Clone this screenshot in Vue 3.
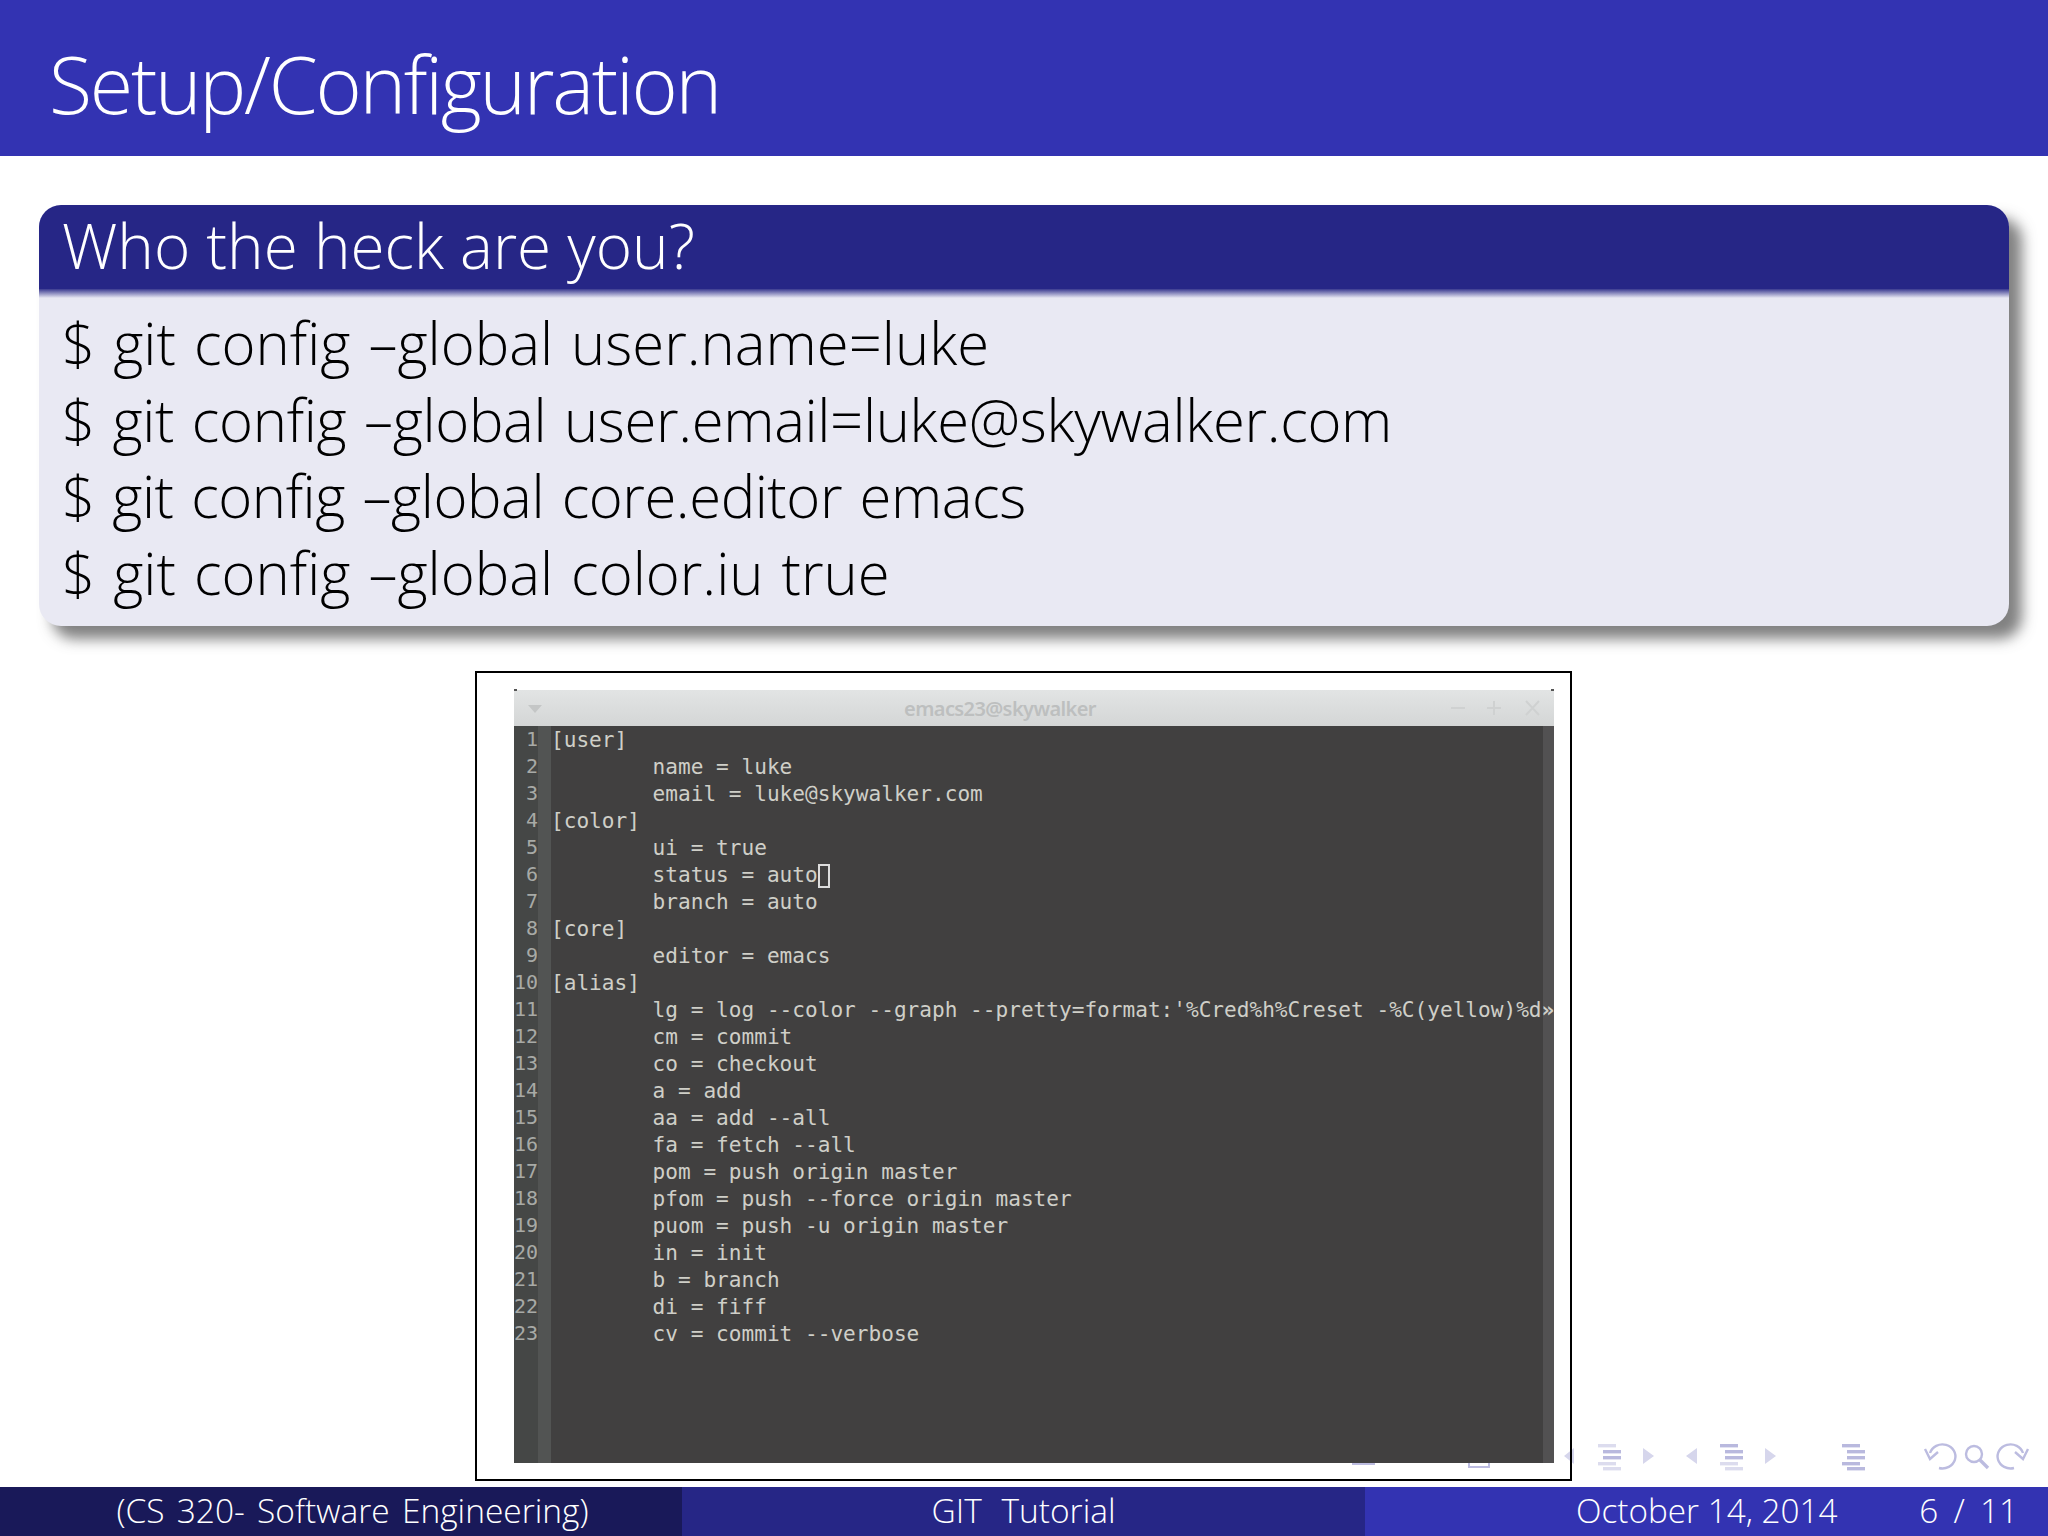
<script setup>
const commands = [
  { text: '$ git config –global user.name=luke', cls: '' },
  { text: '$ git config –global user.email=luke@skywalker.com', cls: 'tight-a' },
  { text: '$ git config –global core.editor emacs', cls: 'tight-b' },
  { text: '$ git config –global color.iu true', cls: '' }
]
const lines = [
  '[user]',
  '        name = luke',
  '        email = luke@skywalker.com',
  '[color]',
  '        ui = true',
  '        status = auto',
  '        branch = auto',
  '[core]',
  '        editor = emacs',
  '[alias]',
  "        lg = log --color --graph --pretty=format:'%Cred%h%Creset -%C(yellow)%d",
  '        cm = commit',
  '        co = checkout',
  '        a = add',
  '        aa = add --all',
  '        fa = fetch --all',
  '        pom = push origin master',
  '        pfom = push --force origin master',
  '        puom = push -u origin master',
  '        in = init',
  '        b = branch',
  '        di = fiff',
  '        cv = commit --verbose'
]
const stack = (x, ops) => [0, 1, 2, 3, 4].map(i => ({
  x: x + (i === 0 || i === 3 ? 0 : 5),
  y: [14, 20, 26, 32, 37][i],
  o: ops[i]
}))
const bars = [
  ...stack(298, [0.5, 1, 1, 0.5, 0.5]),
  ...stack(420, [1, 1, 1, 0.5, 0.5]),
  ...stack(542, [1, 1, 1, 1, 1])
]
</script>

<template>
  <div class="slide">
    <header class="top"><h1>Setup/Configuration</h1></header>
    <main class="content">
      <section class="block">
        <h2>Who the heck are you?</h2>
        <div class="body">
          <p v-for="c in commands" :key="c.text" :class="c.cls">{{ c.text }}</p>
        </div>
      </section>
      <figure class="frame">
        <div class="win">
          <div class="bar">
            <svg class="drop" width="14" height="8" viewBox="0 0 14 8"><path d="M0 0h14L7 8z" fill="#c4c6c6"/></svg>
            <span class="wtitle">emacs23@skywalker</span>
            <svg class="btns" width="90" height="20" viewBox="0 0 90 20">
              <g stroke="#cfd1d1" stroke-width="2" fill="none">
                <path d="M0 10h14M36 10h14M43 3v14M75 3l13 14M88 3L75 17"/>
              </g>
            </svg>
          </div>
          <div class="term">
            <div class="row" v-for="(l, i) in lines" :key="i">
              <span class="num">{{ i + 1 }}</span><span class="code">{{ l }}<i v-if="i === 5" class="cursor"></i><b v-if="i === 10" class="more">»</b></span>
            </div>
          </div>
        </div>
      </figure>
    </main>
    <svg class="nav" width="748" height="50" viewBox="1300 1430 748 50" aria-hidden="true">
      <rect x="1352" y="1456" width="23" height="9" fill="#bcbce0"/>
      <rect x="1469" y="1456" width="20" height="11" fill="none" stroke="#bcbce0" stroke-width="2"/>
      <g transform="translate(1300 1430)" fill="#b9b9de">
        <rect v-for="(b, i) in bars" :key="i" :x="b.x" :y="b.y" width="18" height="3.4" :opacity="b.o"/>
      </g>
      <g fill="#d6d6ec">
        <path d="M1574 1448v16l-10-8z"/>
        <path d="M1643 1448v16l11-8z"/>
        <path d="M1697 1448v16l-11-8z"/>
        <path d="M1765 1448v16l11-8z"/>
      </g>
      <g fill="none" stroke="#bcbce0" stroke-width="2.4">
        <path d="M1930 1453a13 12 0 1 1 9 15"/>
        <path d="M1925 1449l5 10 8-7"/>
        <circle cx="1974" cy="1454" r="8"/>
        <path d="M1980 1460l8 8" stroke-width="3.4"/>
        <path d="M2023 1453a13 12 0 1 0-9 15"/>
        <path d="M2028 1449l-5 10-8-7"/>
      </g>
    </svg>
    <footer class="foot">
      <div class="f1">(CS 320- Software Engineering)</div>
      <div class="f2">GIT Tutorial</div>
      <div class="f3"><span class="date">October 14, 2014</span><span class="page">6 / 11</span></div>
    </footer>
  </div>
</template>

<style>
html, body { margin: 0; background: #fff; }
</style>

<style scoped>
.slide {
  position: relative;
  width: 2048px;
  height: 1536px;
  overflow: hidden;
  display: flex;
  flex-direction: column;
  background: #fff;
  font-family: "Open Sans", "Noto Sans", sans-serif;
  font-weight: 300;
}
.top {
  height: 156px;
  flex: none;
  display: flex;
  align-items: center;
  padding-left: 49px;
  background: #3333b2;
  color: #fff;
}
h1 {
  margin: 0;
  padding-top: 12px;
  font-size: 79px;
  font-weight: 300;
  line-height: 1.2;
  letter-spacing: -2.3px;
}
.content {
  flex: 1;
  min-height: 0;
  display: flex;
  flex-direction: column;
  position: relative;
  z-index: 1;
}
.block {
  margin: 49px 0 0 39px;
  width: 1970px;
  height: 421px;
  border-radius: 22px;
  box-shadow: 13px 13px 14px rgba(80, 80, 80, 0.72);
  display: flex;
  flex-direction: column;
  background: #e9e9f3;
}
h2 {
  margin: 0;
  height: 84px;
  flex: none;
  padding: 0 0 4px 23px;
  display: flex;
  align-items: center;
  box-sizing: border-box;
  background: #262686;
  color: #fff;
  font-size: 62px;
  font-weight: 300;
  line-height: 80px;
  position: relative;
  border-radius: 22px 22px 0 0;
}
h2::after {
  content: "";
  position: absolute;
  left: 0;
  right: 0;
  top: 84px;
  height: 9px;
  background: linear-gradient(#3a3a90, #e9e9f3);
}
.body {
  padding: 16px 0 0 23px;
  color: #000;
  font-size: 58px;
  line-height: 76.6px;
  word-spacing: 3px;
}
.body p { margin: 0; white-space: pre; }
.body .tight-a { letter-spacing: -0.34px; }
.body .tight-b { letter-spacing: -0.45px; }
.frame {
  margin: 45px 0 0 475px;
  width: 1097px;
  height: 810px;
  box-sizing: border-box;
  border: 2px solid #000;
  padding: 17px 16px 16px 37px;
}
.win {
  height: 100%;
  display: flex;
  flex-direction: column;
  font-family: "DejaVu Sans Mono", monospace;
  font-weight: 400;
}
.bar {
  height: 36px;
  flex: none;
  position: relative;
  display: flex;
  align-items: center;
  justify-content: center;
  background: linear-gradient(#e2e4e4, #d4d6d6);
}
.bar::before, .bar::after {
  content: "";
  position: absolute;
  top: -1px;
  width: 3px;
  height: 2px;
  background: #555;
}
.bar::before { left: 0; }
.bar::after { right: 0; }
.wtitle {
  margin-left: -68px;
  font-family: "Noto Sans", sans-serif;
  font-weight: 600;
  font-size: 20px;
  letter-spacing: -0.6px;
  color: #bdbfbf;
}
.drop { position: absolute; left: 14px; top: 15px; }
.btns { position: absolute; right: 13px; top: 8px; }
.term {
  flex: 1;
  min-height: 0;
  background: linear-gradient(90deg, #454746 0 24px, #525453 24px 37px, #414040 37px 1029px, #525152 1029px);
  color: #cfcfc8;
  font-size: 21.1px;
  line-height: 27px;
}
.row { display: flex; height: 27px; white-space: pre; }
.num {
  flex: none;
  width: 24px;
  text-align: right;
  color: #a8aaa6;
  font-size: 20px;
  direction: rtl;
}
.code { margin-left: 13px; position: relative; width: 1003px; overflow: hidden; }
.cursor {
  display: inline-block;
  width: 12px;
  height: 24px;
  box-sizing: border-box;
  border: 2px solid #ddd;
  vertical-align: -6px;
}
.more { font-weight: 700; }
.nav {
  position: absolute;
  left: 1300px;
  top: 1430px;
  z-index: 0;
}
.foot {
  height: 49px;
  flex: none;
  display: flex;
  color: #fff;
  line-height: 46px;
  position: relative;
  z-index: 2;
}
.f1 {
  width: 682px;
  background: #191959;
  padding-left: 23px;
  box-sizing: border-box;
  text-align: center;
  font-size: 33.5px;
  word-spacing: 3.5px;
}
.f2 {
  width: 683px;
  background: #262686;
  text-align: center;
  font-size: 33.5px;
  word-spacing: 11px;
}
.f3 {
  flex: 1;
  background: #3333b2;
  display: flex;
  justify-content: space-between;
  padding: 0 30px 0 211px;
  font-size: 33.3px;
}
.page { word-spacing: 6.5px; }
</style>
